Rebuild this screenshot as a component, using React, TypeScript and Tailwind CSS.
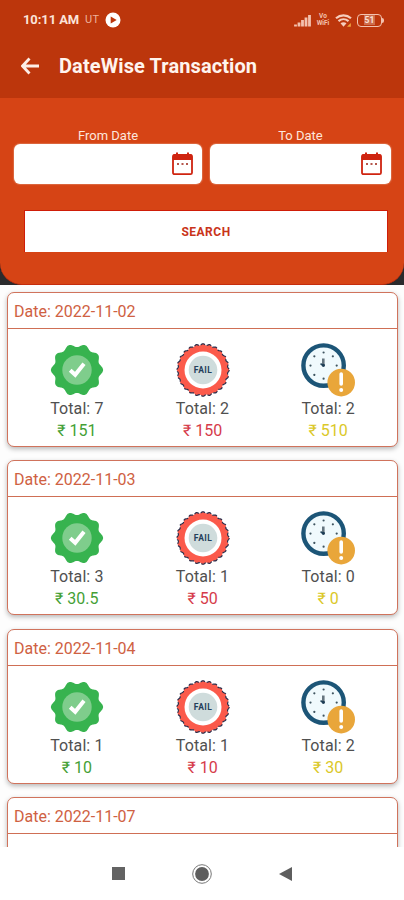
import type { ReactNode } from 'react'

interface Entry {
  total: number
  amount: string
}

interface DayRecord {
  date: string
  stats?: { success: Entry; failed: Entry; pending: Entry }
}

const records: DayRecord[] = [
  { date: '2022-11-02', stats: { success: { total: 7, amount: '151' }, failed: { total: 2, amount: '150' }, pending: { total: 2, amount: '510' } } },
  { date: '2022-11-03', stats: { success: { total: 3, amount: '30.5' }, failed: { total: 1, amount: '50' }, pending: { total: 0, amount: '0' } } },
  { date: '2022-11-04', stats: { success: { total: 1, amount: '10' }, failed: { total: 1, amount: '10' }, pending: { total: 2, amount: '30' } } },
  { date: '2022-11-07' },
]

// closed wavy outline around (27, 27)
function scallop(lobes: number, radius: number, depth: number) {
  const points: string[] = []
  for (let i = 0; i < 240; i++) {
    const a = (i / 240) * Math.PI * 2
    const r = radius + depth * Math.cos(lobes * a)
    points.push(`${(27 + r * Math.cos(a)).toFixed(2)},${(27 + r * Math.sin(a)).toFixed(2)}`)
  }
  return points.join(' ')
}

const badgeOutline = scallop(10, 24.5, 1.6)
const sealOutline = scallop(24, 25.5, 0.7)

function SuccessIcon() {
  return (
    <svg viewBox="0 0 54 54" className="size-[54px]">
      <polygon points={badgeOutline} fill="#37b34f" />
      <circle cx="27" cy="27" r="14.7" fill="#7fcd8c" />
      <path d="M20.2 27.3l5 4.5 8.8-11" fill="none" stroke="#fff" strokeWidth="4" />
    </svg>
  )
}

function FailIcon() {
  return (
    <svg viewBox="0 0 54 54" className="size-[54px]">
      <polygon points={sealOutline} fill="#fb5a4b" />
      <polygon points={sealOutline} fill="none" stroke="#2b2f4c" strokeWidth="1.2" strokeDasharray="5 1.8" />
      <circle cx="27" cy="27" r="18.5" fill="#fff" />
      <circle cx="27" cy="27" r="14.3" fill="#cfdcdc" />
      <text x="27" y="30" textAnchor="middle" fontSize="8.5" fontWeight="700" letterSpacing="0.4" fill="#23405a" className="font-[Roboto,sans-serif]">
        FAIL
      </text>
    </svg>
  )
}

function PendingIcon() {
  return (
    <svg viewBox="0 0 54 54" className="size-[54px]">
      <circle cx="22.6" cy="22.6" r="20.2" fill="#f0fafd" stroke="#1c5577" strokeWidth="4.4" />
      {[0, 45, 90, 135, 180, 225, 270, 315].map((a) => (
        <circle key={a} cx="22.6" cy="9.5" r="1.1" fill="#3f5560" transform={`rotate(${a} 22.6 22.6)`} />
      ))}
      <path d="M22.3 22v-6.5" stroke="#65757f" strokeWidth="2.6" />
      <path d="M22.5 22.4l-3-1.6" stroke="#24475e" strokeWidth="1.6" />
      <circle cx="22.4" cy="22.3" r="1.6" fill="#1d3d55" />
      <circle cx="40.2" cy="39.6" r="13.8" fill="#e9a63a" />
      <path d="M40.2 31v10" stroke="#fff" strokeWidth="3.6" strokeLinecap="round" />
      <circle cx="40.2" cy="47" r="2" fill="#fff" />
    </svg>
  )
}

function CalendarIcon() {
  return (
    <svg viewBox="0 0 21 24" className="h-6 w-[21px]">
      <path d="M5 .5v3M16 .5v3" stroke="#cf2410" strokeWidth="2" />
      <rect x="1" y="3.2" width="19" height="19" rx="1.5" fill="#fff" stroke="#cf2410" strokeWidth="1.8" />
      <path d="M.5 4a2 2 0 0 1 2-2h16a2 2 0 0 1 2 2v4H.5z" fill="#cf2410" />
      <path d="M5 12h2M9.5 12h2M14 12h2" stroke="#b5574c" strokeWidth="1.8" />
    </svg>
  )
}

function StatusBar() {
  return (
    <div className="flex h-10 items-center justify-between pr-5 pl-[23px] text-[#fbe3d9]">
      <div className="flex items-center">
        <span className="text-[13px] font-bold tracking-[-0.1px]">10:11 AM</span>
        <span className="ml-[6px] text-[11px] tracking-[0.3px] text-[#eeb19c]">UT</span>
        <svg viewBox="0 0 16 16" className="ml-[6px] size-4">
          <circle cx="8" cy="8" r="7.5" fill="#fff" />
          <path d="M5.700 4.500l6 3.500-6 3.500z" fill="#bc360c" />
        </svg>
      </div>
      <div className="flex items-center gap-[5px]">
        <svg viewBox="0 0 17 13" className="h-[13px] w-[17px]">
          <path d="M1.500 10.500v2M5 8.500v4M8.500 6v6.500M12 3.500v9M15.500 1v11.500" stroke="#f3c1ae" strokeWidth="2.8" />
        </svg>
        <div className="w-[14px] text-center text-[6.5px] leading-[7px] font-bold text-[#f3c1ae]">
          <p>Vo</p>
          <p className="whitespace-nowrap">WiFi</p>
        </div>
        <svg viewBox="0 0 17 13" className="h-[13px] w-[17px]">
          <g fill="none" stroke="#f6cdbd" strokeWidth="2.2">
            <path d="M1 4.300c4.300-3.800 10.700-3.800 15 0" />
            <path d="M3.500 7.100c2.900-2.500 7.100-2.500 10 0" />
          </g>
          <path d="M5.500 9.300c1.800-1.500 4.200-1.500 6 0l-3 3.500z" fill="#f6cdbd" />
          <path d="M12 12.800l3.800-3.800v3.800z" fill="#f1a63f" />
        </svg>
        <div className="flex items-center">
          <div className="flex h-[13px] w-[25px] items-center justify-center rounded-[4px] border-[1.5px] border-[#f3c1ae]">
            <span className="bg-[#cd6d4d] px-px text-[8.5px] leading-[10px] font-bold">51</span>
          </div>
          <div className="h-[5px] w-[2px] rounded-r-sm bg-[#f3c1ae]" />
        </div>
      </div>
    </div>
  )
}

function DateField({ label, className }: { label: string; className: string }) {
  return (
    <div className={className}>
      <p className="text-center text-[13px] leading-[17px] text-[#fde6dc]">{label}</p>
      <div className="flex h-10 items-center justify-end rounded-[6px] bg-white pr-[9px] shadow-[0_0_1px_1px_#dc6a42]">
        <CalendarIcon />
      </div>
    </div>
  )
}

function Stat({ icon, entry, color }: { icon: ReactNode; entry: Entry; color: string }) {
  return (
    <div className="flex flex-1 flex-col items-center">
      {icon}
      <p className="mt-px text-[16px] leading-[22px] tracking-[0.1px] text-[#505050]">Total: {entry.total}</p>
      <p className={`text-[16px] leading-[22px] ${color}`}>₹ {entry.amount}</p>
    </div>
  )
}

function DayCard({ record }: { record: DayRecord }) {
  const { date, stats } = record
  return (
    <div className="h-[155px] shrink-0 rounded-[7px] border border-[#d0735c] bg-white shadow-[0_2px_5px_rgba(0,0,0,0.28)] nth-3:mt-px">
      <div className="h-9 border-b border-[#cf6f55] pt-[7px] pl-[6px] text-[16px] leading-[23px] text-[#cf6142]">
        Date: {date}
      </div>
      {stats && (
        <div className="flex px-[6px] pt-[14px]">
          <Stat icon={<SuccessIcon />} entry={stats.success} color="text-[#449f35]" />
          <Stat icon={<FailIcon />} entry={stats.failed} color="text-[#d63b4a]" />
          <Stat icon={<PendingIcon />} entry={stats.pending} color="text-[#dbc828]" />
        </div>
      )}
    </div>
  )
}

export default function App() {
  return (
    <div className="flex h-[900px] w-[404px] flex-col overflow-hidden bg-white font-[Roboto,sans-serif]">
      <header className="h-[98px] shrink-0 bg-[#bc360c]">
        <StatusBar />
        <div className="flex h-[52px] items-center pl-[21px]">
          <svg viewBox="0 0 19 18" className="h-[18px] w-[19px]">
            <path d="M18 9H2M8.500 1.500L1.500 9l7 7.500" fill="none" stroke="#fdeee7" strokeWidth="2.8" />
          </svg>
          <h1 className="ml-[19px] text-[20px] font-bold tracking-[0.1px] text-[#fff4ee]">DateWise Transaction</h1>
        </div>
      </header>

      <div className="h-[187px] shrink-0 bg-[#2b2b2d]">
        <section className="h-full rounded-b-[22px] border-b border-[#c52c0c] bg-[#d64415] pt-[29px]">
          <div className="flex gap-2 pl-[14px]">
            <DateField label="From Date" className="w-[188px]" />
            <DateField label="To Date" className="w-[181px]" />
          </div>
          <button className="mt-[26px] ml-6 flex h-[42px] w-[364px] items-center justify-center border-x border-t border-[#cf1d08] bg-white text-[12px] font-bold tracking-[0.5px] text-[#c9341a]">
            SEARCH
          </button>
        </section>
      </div>

      <main className="flex min-h-0 flex-1 flex-col gap-[13px] overflow-hidden bg-[#fdfdfd] pt-[7px] pr-[6px] pl-[7px]">
        {records.map((r) => (
          <DayCard key={r.date} record={r} />
        ))}
      </main>

      <nav className="flex h-[53px] shrink-0 items-center justify-center gap-[67px] bg-white">
        <div className="size-[13px] bg-[#636363]" />
        <svg viewBox="0 0 20 20" className="size-5">
          <circle cx="10" cy="10" r="9.3" fill="none" stroke="#777" strokeWidth="1" />
          <circle cx="10" cy="10" r="6.9" fill="#5e5e5e" />
        </svg>
        <svg viewBox="0 0 13 14" className="h-[14px] w-[13px]">
          <path d="M13 0v14L0 7z" fill="#5e5e5e" />
        </svg>
      </nav>
    </div>
  )
}
